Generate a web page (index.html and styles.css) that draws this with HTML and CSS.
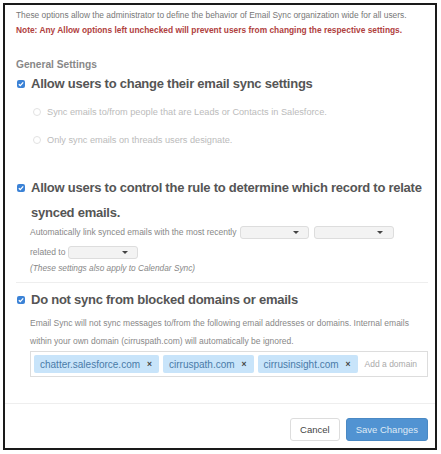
FILE: index.html
```html
<!DOCTYPE html>
<html lang="en">
<head>
    <meta charset="UTF-8">
    <title>Email Sync settings</title>
    <link rel="stylesheet" href="styles.css">
</head>
<body>
    <div class="frame">
        <div class="content">
            <p class="intro">These options allow the administrator to define the behavior of Email Sync organization wide for all users.</p>
            <p class="note">Note: Any Allow options left unchecked will prevent users from changing the respective settings.</p>

            <h3 class="group">General Settings</h3>

            <div class="option">
                <h2 class="opt-title"><span class="check"><svg viewBox="0 0 8 8" width="8" height="8"><path d="M1.8 4.2 L3.3 5.6 L6.2 2.4" fill="none" stroke="#fff" stroke-width="1.3"/></svg></span>Allow users to change their email sync settings</h2>
                <ul class="radios">
                    <li><span class="radio"></span>Sync emails to/from people that are Leads or Contacts in Salesforce.</li>
                    <li><span class="radio"></span>Only sync emails on threads users designate.</li>
                </ul>
            </div>

            <div class="option second">
                <h2 class="opt-title"><span class="check"><svg viewBox="0 0 8 8" width="8" height="8"><path d="M1.8 4.2 L3.3 5.6 L6.2 2.4" fill="none" stroke="#fff" stroke-width="1.3"/></svg></span>Allow users to control the rule to determine which record to relate synced emails.</h2>
                <div class="sub">
                    <div class="row">Automatically link synced emails with the most recently
                        <span class="select"><i class="caret"></i></span>
                        <span class="select wide"><i class="caret"></i></span>
                    </div>
                    <div class="row related">related to <span class="select"><i class="caret"></i></span></div>
                    <p class="hint">(These settings also apply to Calendar Sync)</p>
                </div>
            </div>

            <div class="option third">
                <h2 class="opt-title"><span class="check"><svg viewBox="0 0 8 8" width="8" height="8"><path d="M1.8 4.2 L3.3 5.6 L6.2 2.4" fill="none" stroke="#fff" stroke-width="1.3"/></svg></span>Do not sync from blocked domains or emails</h2>
                <div class="sub">
                    <p class="desc">Email Sync will not sync messages to/from the following email addresses or domains. Internal emails within your own domain (cirruspath.com) will automatically be ignored.</p>
                    <div class="tags">
                        <span class="tag">chatter.salesforce.com <b>×</b></span>
                        <span class="tag">cirruspath.com <b>×</b></span>
                        <span class="tag">cirrusinsight.com <b>×</b></span>
                        <span class="placeholder">Add a domain</span>
                    </div>
                </div>
            </div>
        </div>
        <div class="footer">
            <button class="btn">Cancel</button>
            <button class="btn primary">Save Changes</button>
        </div>
    </div>
</body>
</html>
```

FILE: styles.css
```css
html, body {
    margin: 0;
    background: #fff;
}
body {
    padding: 3px 4px 4px 3px;
    font-family: "Liberation Sans", Arial, sans-serif;
    color: #666;
}
.frame {
    border: 2px solid #1a1a1a;
    height: 447px;
    box-sizing: border-box;
    display: flex;
    flex-direction: column;
}
.content {
    padding: 3px 7px 0 11px;
    flex-grow: 1;
}
p {
    margin: 0;
}
.intro {
    font-size: 8.4px;
    line-height: 15px;
    color: #777;
}
.note {
    font-size: 8.4px;
    line-height: 15px;
    font-weight: bold;
    color: #b0413e;
}
.group {
    margin: 20px 0 0;
    font-size: 10.2px;
    line-height: 14px;
    font-weight: bold;
    color: #888;
}
.opt-title {
    margin: 0;
    font-size: 13px;
    letter-spacing: -0.25px;
    line-height: 24px;
    font-weight: bold;
    color: #555;
    display: flex;
    align-items: flex-start;
}
.check {
    flex: none;
    width: 8px;
    height: 8px;
    margin: 8px 6px 0 1px;
    border-radius: 2px;
    background: #3b82d6;
    display: flex;
}
.radios {
    list-style: none;
    margin: 9px 0 0;
    padding: 0 0 0 17px;
}
.radios li {
    font-size: 9.2px;
    color: #bbb;
    line-height: 14px;
    margin-bottom: 14px;
    display: flex;
    align-items: center;
}
.radios li:last-child {
    margin-bottom: 0;
}
.radio {
    width: 8px;
    height: 8px;
    box-sizing: border-box;
    border: 1px solid #e2e2e2;
    border-radius: 50%;
    margin-right: 6px;
}
.second {
    margin-top: 28px;
}
.second .opt-title {
    line-height: 25px;
}
.second .check {
    margin-top: 9px;
}
.sub {
    padding-left: 14px;
    font-size: 8.5px;
    color: #888;
}
.row {
    display: flex;
    align-items: center;
    gap: 4px;
    height: 14px;
}
.row.related {
    margin-top: 6px;
}
.select {
    width: 69px;
    height: 13px;
    border: 1px solid #ddd;
    border-radius: 3px;
    background: #f3f3f3;
    display: flex;
    align-items: center;
    justify-content: flex-end;
    padding-right: 9px;
    box-sizing: border-box;
}
.select.wide {
    width: 80px;
    margin-left: 1px;
    padding-right: 10px;
}
.related .select {
    width: 70px;
    margin-left: -1px;
}
.caret {
    border-left: 3px solid transparent;
    border-right: 3px solid transparent;
    border-top: 3px solid #444;
}
.hint {
    margin-top: 2px;
    font-size: 8.3px;
    font-style: italic;
    line-height: 14px;
}
.third {
    margin-top: 7px;
    padding-top: 5px;
    border-top: 1px solid #eee;
}
.desc {
    line-height: 18px;
    margin-top: 2px;
}
.tags {
    margin-top: 1px;
    border: 1px solid #ddd;
    height: 26px;
    box-sizing: border-box;
    display: flex;
    align-items: center;
    gap: 4px;
    padding: 0 3px;
}
.tag {
    background: #c8e4fa;
    color: #4a7ba8;
    font-size: 10px;
    height: 18px;
    display: flex;
    align-items: center;
    padding: 0 7px 0 6px;
    border-radius: 2px;
    gap: 7px;
}
.tag b {
    color: #444;
    font-size: 8.5px;
}
.placeholder {
    font-size: 8.5px;
    color: #aaa;
    margin-left: 3px;
}
.footer {
    border-top: 1px solid #eee;
    height: 45px;
    box-sizing: border-box;
    display: flex;
    align-items: flex-start;
    justify-content: flex-end;
    gap: 6px;
    padding: 14px 7px 0 0;
}
.btn {
    font-family: inherit;
    font-size: 9.5px;
    height: 23px;
    padding: 0 9px;
    border: 1px solid #ddd;
    border-radius: 3px;
    background: #fff;
    color: #444;
}
.btn.primary {
    background: #5193d2;
    border-color: #4a89c4;
    color: #dfeaf5;
}
```
